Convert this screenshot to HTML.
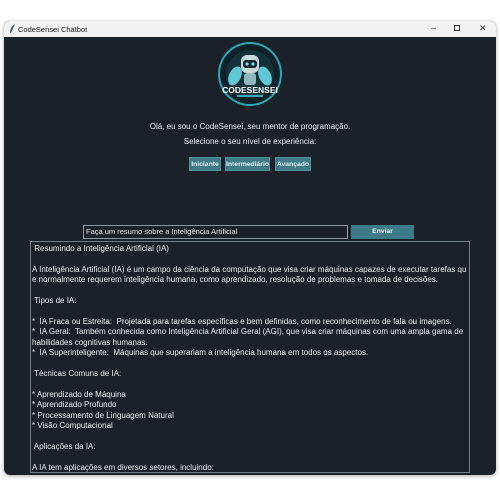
<!DOCTYPE html>
<html><head><meta charset="utf-8">
<style>
*{margin:0;padding:0;box-sizing:border-box}
body{width:500px;height:500px;background:#fff;position:relative;overflow:hidden;font-family:"Liberation Sans","DejaVu Sans",sans-serif}
.win{position:absolute;left:4px;top:21px;width:492px;height:454px;border-radius:6px;overflow:hidden;background:#1a2129;box-shadow:0 1px 4px rgba(0,0,0,.35)}
.tb{height:16px;background:#f3f2f2;position:relative;font-size:7.5px;color:#222}
.tb .t{position:absolute;left:14px;top:4px}
.tb .c{position:absolute;top:2px;font-size:9px;color:#333}
.ctr{position:absolute;left:0;width:492px;text-align:center;color:#e6ecef;font-size:8px}
.btn{position:absolute;top:136px;height:14px;background:#3e7b88;color:#e8f2f4;font-size:6.8px;font-weight:600;text-align:center;line-height:14px;border:1px solid #4e8d99}
.inp{position:absolute;left:79px;top:204px;width:265px;height:14px;border:1px solid #8a9aa3;background:#1a2129;color:#e4e8ea;font-size:7.5px;line-height:12px;padding-left:2px}
.env{position:absolute;left:347px;top:204px;width:63px;height:14px;background:#3e7b88;color:#e8f2f4;font-size:6.8px;font-weight:600;text-align:center;line-height:14px}
.box{position:absolute;left:26px;top:220px;width:440px;height:232px;border:1px solid #6e7f88;color:#e8ecee;font-size:8px;line-height:10.4px;padding:2px 0 0 1px;white-space:pre;overflow:hidden}
</style></head><body>
<div class="win">
 <div class="tb">
  <svg style="position:absolute;left:5px;top:3px" width="7" height="10" viewBox="0 0 7 10"><path d="M6 0 C3 2 1 5 1 9 L2 9 C3 6 5 3 6 0Z" fill="#3a5a8a"/></svg>
  <span class="t">CodeSensei Chatbot</span>
  <span class="c" style="left:427px">–</span>
  <span class="c" style="left:450px;top:4px;width:6px;height:6px;border:1px solid #333"></span>
  <span class="c" style="left:475px">✕</span>
 </div>
 <svg style="position:absolute;left:213px;top:20px" width="66" height="66" viewBox="0 0 66 66">
  <circle cx="33" cy="33" r="32" fill="#2aa7b8"/>
  <circle cx="33" cy="33" r="30" fill="#0f2128"/>
  <circle cx="33" cy="33" r="24" fill="#123640" opacity=".8"/>
  <ellipse cx="18" cy="35" rx="6" ry="10" fill="#6fe3f0" opacity=".85" transform="rotate(25 18 35)"/>
  <ellipse cx="48" cy="35" rx="6" ry="10" fill="#6fe3f0" opacity=".85" transform="rotate(-25 48 35)"/>
  <rect x="24" y="14" width="18" height="18" rx="6" fill="#c9d6da"/>
  <rect x="26" y="19" width="14" height="8" rx="3" fill="#10262c"/>
  <circle cx="30" cy="23" r="1.6" fill="#6fe3f0"/><circle cx="36" cy="23" r="1.6" fill="#6fe3f0"/>
  <rect x="27" y="32" width="12" height="12" rx="3" fill="#8fb7c0"/>
  <text x="33" y="52" text-anchor="middle" font-family="Liberation Sans,sans-serif" font-weight="bold" font-size="8.5" fill="#fff">CODESENSEI</text>
  <rect x="20" y="54" width="26" height="2" fill="#3aa9b8"/>
 </svg>
 <div class="ctr" style="top:101px">Olá, eu sou o CodeSensei, seu mentor de programação.</div>
 <div class="ctr" style="top:116px">Selecione o seu nível de experiência:</div>
 <div class="btn" style="left:185px;width:32px">Iniciante</div>
 <div class="btn" style="left:221px;width:45px">Intermediário</div>
 <div class="btn" style="left:271px;width:36px">Avançado</div>
 <div class="inp">Faça um resumo sobre a Inteligência Artificial</div>
 <div class="env">Enviar</div>
 <div class="box"> Resumindo a Inteligência Artificial (IA)

A Inteligência Artificial (IA) é um campo da ciência da computação que visa criar máquinas capazes de executar tarefas qu
e normalmente requerem inteligência humana, como aprendizado, resolução de problemas e tomada de decisões.

 Tipos de IA:

*  IA Fraca ou Estreita:  Projetada para tarefas específicas e bem definidas, como reconhecimento de fala ou imagens.
*  IA Geral:  Também conhecida como Inteligência Artificial Geral (AGI), que visa criar máquinas com uma ampla gama de
habilidades cognitivas humanas.
*  IA Superinteligente:  Máquinas que superariam a inteligência humana em todos os aspectos.

 Técnicas Comuns de IA:

* Aprendizado de Máquina
* Aprendizado Profundo
* Processamento de Linguagem Natural
* Visão Computacional

 Aplicações da IA:

A IA tem aplicações em diversos setores, incluindo:</div>
</div>
</body></html>
